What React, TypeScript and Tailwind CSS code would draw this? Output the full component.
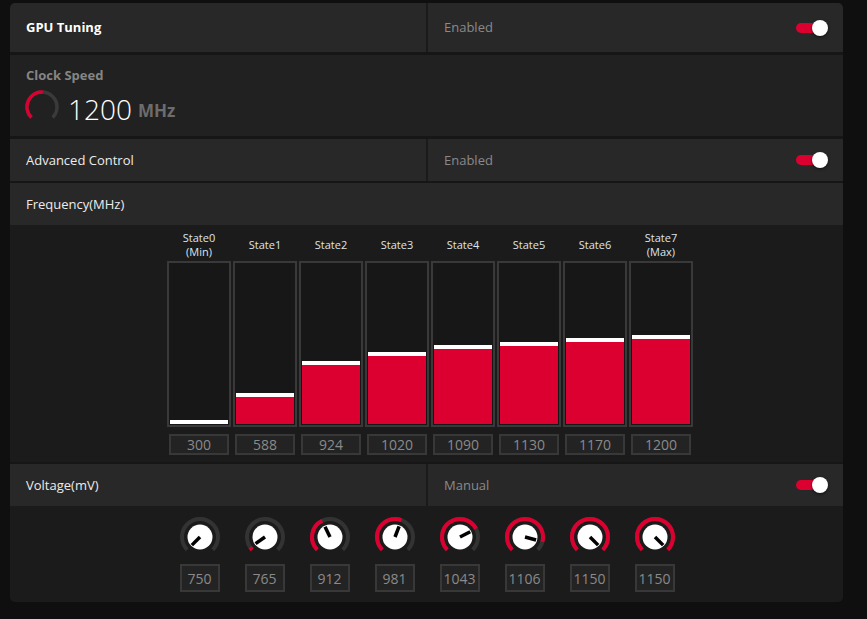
import type { ReactNode } from 'react'

const RED = '#dc0030'

const states = [
  { top: 'State0', sub: '(Min)', v: 300 },
  { top: 'State1', v: 588 },
  { top: 'State2', v: 924 },
  { top: 'State3', v: 1020 },
  { top: 'State4', v: 1090 },
  { top: 'State5', v: 1130 },
  { top: 'State6', v: 1170 },
  { top: 'State7', sub: '(Max)', v: 1200 },
]

const volts = [750, 765, 912, 981, 1043, 1106, 1150, 1150]

function pt(cx: number, cy: number, r: number, a: number) {
  const rad = (a * Math.PI) / 180
  return [cx + r * Math.sin(rad), cy - r * Math.cos(rad)]
}

function arc(cx: number, cy: number, r: number, a0: number, a1: number) {
  const [x0, y0] = pt(cx, cy, r, a0)
  const [x1, y1] = pt(cx, cy, r, a1)
  const large = a1 - a0 > 180 ? 1 : 0
  return `M ${x0} ${y0} A ${r} ${r} 0 ${large} 1 ${x1} ${y1}`
}

function Toggle() {
  return (
    <div className="relative h-[16px] w-[32px]">
      <div className="absolute left-0 top-[3px] h-[10px] w-[30px] rounded-full bg-[#dc0030]" />
      <div className="absolute right-0 top-0 h-[16px] w-[16px] rounded-full bg-white shadow-[0_1px_3px_rgba(0,0,0,0.6)]" />
    </div>
  )
}

function HeaderRow({ label, value, bold, h }: { label: string; value: string; bold?: boolean; h: string }) {
  return (
    <div className={`flex ${h} bg-[#282828]`}>
      <div className={`flex w-[416px] items-center px-[16px] pt-[1px] text-[13px] ${bold ? 'font-bold text-white' : 'text-[#ececec]'}`}>
        {label}
      </div>
      <div className="w-[2px] bg-[#1a1a1a]" />
      <div className="flex flex-1 items-center justify-between pl-[16px] pr-[15px] text-[13px] text-[#8a8a8a]">
        <span className="pt-[1px]">{value}</span>
        <Toggle />
      </div>
    </div>
  )
}

function Knob({ v }: { v: number }) {
  const f = Math.max(0, Math.min(1, (v - 750) / 400))
  const a = -135 + f * 270
  const [px, py] = pt(22, 22, 11.5, a)
  return (
    <svg width="44" height="44" viewBox="0 0 44 44">
      <path d={arc(22, 22, 18, -135, 135)} stroke="#333333" strokeWidth="4" fill="none" />
      {f > 0 && <path d={arc(22, 22, 18, -135, a)} stroke={RED} strokeWidth="4" fill="none" />}
      <circle cx="22" cy="22" r="12.5" fill="white" />
      <line x1="22" y1="22" x2={px} y2={py} stroke="black" strokeWidth="3.5" />
    </svg>
  )
}

function Box({ children, w, h }: { children: ReactNode; w: string; h: string }) {
  return (
    <div className={`mx-auto flex ${w} ${h} items-center justify-center border-2 border-[#383838] bg-[#232323] text-[14px] text-[#8a8a8a]`}>
      {children}
    </div>
  )
}

export default function App() {
  return (
    <div className="h-[619px] w-[867px] bg-[#0f0f0f] pl-[10px] pt-[3px]" style={{ fontFamily: '"Open Sans", "Noto Sans", sans-serif' }}>
      <div className="flex w-[833px] flex-col overflow-hidden rounded-[5px] bg-[#161616]">
        <HeaderRow label="GPU Tuning" value="Enabled" bold h="h-[49px]" />

        <div className="mt-[3px] flex h-[81px] flex-col bg-[#212121] px-[16px] pt-[11px]">
          <div className="text-[13px] font-bold leading-[18px] text-[#858585]">Clock Speed</div>
          <div className="mt-[7px] flex items-center">
            <svg width="36" height="36" viewBox="0 0 36 36" className="-ml-[2px] -mt-[4px]">
              <path d={arc(18, 18, 15, -135, 135)} stroke="#3a3a3a" strokeWidth="3.5" fill="none" />
              <path d={arc(18, 18, 15, -135, 3)} stroke={RED} strokeWidth="3.5" fill="none" />
            </svg>
            <span className="ml-[8px] text-[28px] font-light leading-[36px] text-white">1200</span>
            <span className="ml-[6px] mt-[4px] text-[17px] font-bold text-[#6c6c6c]">MHz</span>
          </div>
        </div>

        <div className="mt-[3px]">
          <HeaderRow label="Advanced Control" value="Enabled" h="h-[42px]" />
        </div>

        <div className="mt-[2px] flex h-[42px] items-center bg-[#282828] px-[16px] pt-[1px] text-[13px] text-[#ececec]">
          Frequency(MHz)
        </div>

        <div className="flex h-[237px] gap-[2px] bg-[#1b1b1b] pl-[157px] pt-[5px]">
          {states.map((s) => {
            const fill = 4 + ((s.v - 300) * 85) / 900
            return (
              <div key={s.top} className="flex w-[64px] flex-col">
                <div className="flex h-[31px] flex-col items-center justify-center pb-[2px] text-[11px] leading-[14px] text-[#dde4ec]">
                  <span>{s.top}</span>
                  {s.sub && <span>{s.sub}</span>}
                </div>
                <div className="flex h-[166px] flex-col justify-end border-2 border-[#393939] bg-[#171717] px-[1px] pb-[1px]">
                  <div className="flex flex-col bg-[#dc0030]" style={{ height: fill }}>
                    <div className="h-[4px] bg-white" />
                  </div>
                </div>
                <div className="mt-[7px]">
                  <Box w="w-[60px]" h="h-[21px]">{s.v}</Box>
                </div>
              </div>
            )
          })}
        </div>

        <div className="mt-[2px]">
          <HeaderRow label="Voltage(mV)" value="Manual" h="h-[42px]" />
        </div>

        <div className="flex h-[96px] bg-[#1b1b1b] pl-[157px] pt-[9px]">
          {volts.map((v, i) => (
            <div key={i} className="flex w-[65px] flex-col items-center">
              <Knob v={v} />
              <div className="mt-[5px]">
                <Box w="w-[40px]" h="h-[28px]">{v}</Box>
              </div>
            </div>
          ))}
        </div>
      </div>
    </div>
  )
}
